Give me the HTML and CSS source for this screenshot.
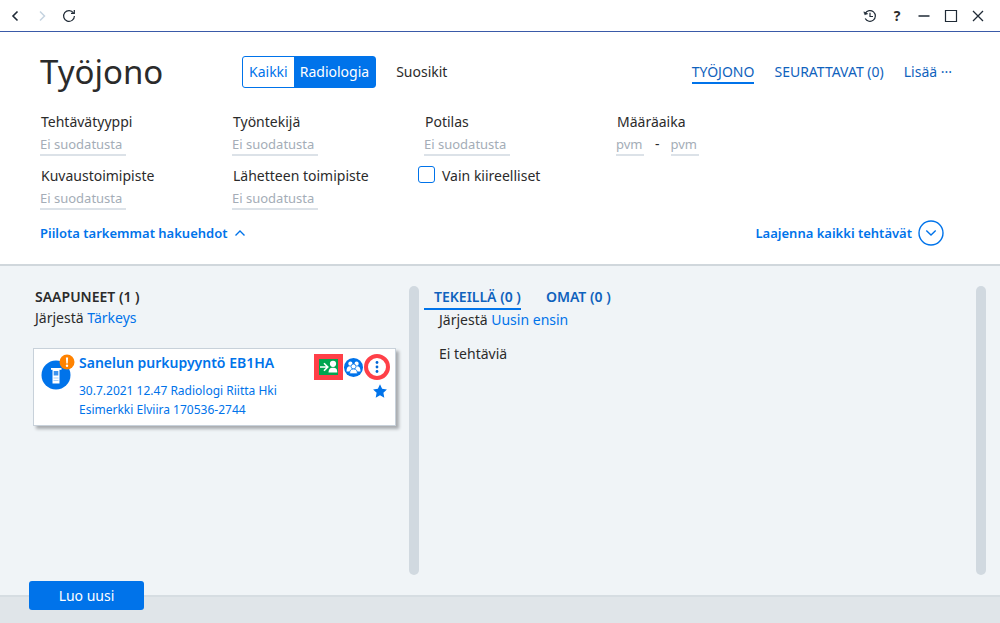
FILE: index.html
```
<!DOCTYPE html>
<html lang="fi">
    <head>
        <title>Työjono</title>
        <meta charset="UTF-8">
        <meta name="viewport" content="width=device-width, initial-scale=1.0">
        <link rel="stylesheet" href="styles.css">
    </head>
    <body>
        <div class="titlebar">
            <button class="tool" aria-label="Takaisin"><svg width="14" height="14" viewBox="0 0 14 14"><path d="M9.5 2.5L5 7l4.5 4.5" stroke-width="1.6"/></svg></button>
            <button class="tool off" aria-label="Eteenpäin" disabled><svg width="14" height="14" viewBox="0 0 14 14"><path d="M5 2.500l4.500 4.500L5 11.500" stroke-width="1.500"/></svg></button>
            <button class="tool" aria-label="Päivitä"><svg width="14" height="14" viewBox="0 0 14 14"><path d="M11.500 4A5.400 5.400 0 1 0 12.400 7" /><path d="M9 4.300h3.300V1"/></svg></button>
            <span class="space"></span>
            <button class="tool" aria-label="Historia"><svg width="14" height="14" viewBox="0 0 14 14"><path d="M2.300 4.200A5.400 5.400 0 1 1 2.200 9.500"/><path d="M7 3.800V7.500h3"/><path d="M.8 2.800l1 3 3-1z" fill="#1f2a36" stroke-width=".5"/></svg></button>
            <button class="tool help" aria-label="Ohje">?</button>
            <button class="tool" aria-label="Pienennä"><svg width="14" height="14" viewBox="0 0 14 14"><path d="M1.500 7h11" stroke-width="1.500"/></svg></button>
            <button class="tool" aria-label="Suurenna"><svg width="14" height="14" viewBox="0 0 14 14"><path d="M1.500 1.500h11v11h-11z"/></svg></button>
            <button class="tool" aria-label="Sulje"><svg width="14" height="14" viewBox="0 0 14 14"><path d="M2 2l10 10M12 2L2 12" stroke-width="1.300"/></svg></button>
        </div>
        <header class="top">
            <div class="head">
                <h1>Työjono</h1>
                <div class="switch">
                    <button>Kaikki</button><button class="on">Radiologia</button>
                </div>
                <button class="plain">Suosikit</button>
                <nav class="views">
                    <a class="current" href="#">TYÖJONO</a>
                    <a href="#">SEURATTAVAT (0)</a>
                    <a class="more" href="#">Lisää ···</a>
                </nav>
            </div>
            <form class="filters">
                <div class="field">
                    <label for="tyyppi">Tehtävätyyppi</label>
                    <input id="tyyppi" type="text" placeholder="Ei suodatusta">
                </div>
                <div class="field">
                    <label for="tekija">Työntekijä</label>
                    <input id="tekija" type="text" placeholder="Ei suodatusta">
                </div>
                <div class="field">
                    <label for="potilas">Potilas</label>
                    <input id="potilas" type="text" placeholder="Ei suodatusta">
                </div>
                <div class="field">
                    <label for="alku">Määräaika</label>
                    <div class="dates">
                        <input id="alku" class="pvm" type="text" placeholder="pvm">
                        <span>-</span>
                        <input class="pvm" type="text" placeholder="pvm" aria-label="Määräaika loppu">
                    </div>
                </div>
                <div class="field">
                    <label for="kuvaus">Kuvaustoimipiste</label>
                    <input id="kuvaus" type="text" placeholder="Ei suodatusta">
                </div>
                <div class="field">
                    <label for="lahete">Lähetteen toimipiste</label>
                    <input id="lahete" type="text" placeholder="Ei suodatusta">
                </div>
                <div class="check">
                    <input id="kiire" type="checkbox">
                    <label for="kiire">Vain kiireelliset</label>
                </div>
            </form>
            <div class="toggles">
                <button class="link">Piilota tarkemmat hakuehdot
                    <svg width="12" height="12" viewBox="0 0 12 12"><path d="M1.500 8.500L6 4l4.500 4.500" stroke-width="1.400"/></svg>
                </button>
                <button class="link">Laajenna kaikki tehtävät
                    <svg class="round" width="26" height="26" viewBox="0 0 26 26"><circle cx="13" cy="13" r="12" stroke-width="1.400"/><path d="M8.300 10.500L13 15l4.700-4.500" stroke-width="1.400"/></svg>
                </button>
            </div>
        </header>
        <main>
            <section class="incoming">
                <h2>SAAPUNEET (1 )</h2>
                <p class="sort">Järjestä <a href="#">Tärkeys</a></p>
                <article class="card">
                    <svg class="type" width="34" height="36" viewBox="0 0 34 36">
                        <circle cx="15" cy="21" r="14.500" fill="#0073ea"/>
                        <path d="M11.500 14h7v15.500h-7z" fill="#fff"/>
                        <path d="M10 14h10.500v1.800H10z" fill="#fff"/>
                        <path d="M12.700 17h4.600v4.500h-4.600z" fill="#3b93ef"/>
                        <path d="M12.500 23.500h5v1h-5zM12.500 26h5v1h-5z" fill="#a8cff8"/>
                        <circle cx="26" cy="8" r="7.500" fill="#ff8200"/>
                        <path d="M24.900 3.500h2.200l-.4 6h-1.400z" fill="#fff"/>
                        <circle cx="26" cy="11.700" r="1.200" fill="#fff"/>
                    </svg>
                    <div class="info">
                        <h3><a href="#">Sanelun purkupyyntö EB1HA</a></h3>
                        <p>30.7.2021 12.47 Radiologi Riitta Hki</p>
                        <p>Esimerkki Elviira 170536-2744</p>
                    </div>
                    <div class="actions">
                        <button class="take" aria-label="Ota tehtävä"><svg width="19" height="16" viewBox="0 0 19 16"><path d="M1 8h7.500M5 4.200L8.800 8 5 11.800" fill="none" stroke="#fff" stroke-width="1.600"/><circle cx="14" cy="4.800" r="3.100" fill="#fff"/><path d="M9.500 13.500c.3-3.500 1.500-4.700 4.500-4.700s4.200 1 4.300 4.700z" fill="#fff"/></svg></button>
                        <button aria-label="Ryhmä"><svg width="19" height="19" viewBox="0 0 19 19"><circle cx="9.500" cy="9.500" r="9.500" fill="#0073ea"/><g fill="#fff"><circle cx="6.400" cy="5.700" r="2.100"/><circle cx="12.600" cy="5.700" r="2.100"/><path d="M2.500 13.500c0-3.500.9-5.300 3.700-5.300S9.500 10 9.500 13.500zM9.500 13.500c0-3.500.5-5.300 3.300-5.300s3.700 1.800 3.700 5.300z"/><g stroke="#0073ea" stroke-width=".8"><circle cx="9.500" cy="8.500" r="2.500"/><path d="M5.600 15.800c0-3.200 1.100-4.800 3.900-4.800s3.900 1.600 3.900 4.800z"/></g></g></svg></button>
                        <button class="menu" aria-label="Lisää toimintoja"><svg width="18" height="18" viewBox="0 0 18 18"><g fill="#0066d6"><circle cx="9" cy="4.500" r="1.400"/><circle cx="9" cy="9" r="1.400"/><circle cx="9" cy="13.500" r="1.400"/></g></svg></button>
                        <button class="star" aria-label="Suosikki"><svg width="14" height="14" viewBox="0 0 14 14"><path d="M7 .3l2.100 4.500 4.800.6-3.500 3.400.9 4.900L7 11.300l-4.300 2.400.9-4.900L.1 5.400l4.800-.6z" fill="#0073ea"/></svg></button>
                    </div>
                </article>
            </section>
            <div class="bar"></div>
            <section class="ongoing">
                <nav class="tabs">
                    <a class="current" href="#">TEKEILLÄ (0 )</a>
                    <a href="#">OMAT (0 )</a>
                </nav>
                <p class="sort">Järjestä <a href="#">Uusin ensin</a></p>
                <p class="empty">Ei tehtäviä</p>
            </section>
            <div class="bar"></div>
        </main>
        <footer>
            <button class="new">Luo uusi</button>
        </footer>
    </body>
</html>
```
FILE: styles.css
```
*{
    box-sizing: border-box;
}
body{
    margin: 0;
    min-height: 100vh;
    display: flex;
    flex-direction: column;
    background-color: #f0f4f7;
    color: #2b2b2b;
    font-family: "Noto Sans", sans-serif;
    font-size: 14px;
    line-height: 20px;
}
h1,h2,h3,p{
    margin: 0;
}
a{
    color: #0073ea;
    text-decoration: none;
}
button{
    font: inherit;
    color: inherit;
    background: none;
    border: 0;
    padding: 0;
    cursor: pointer;
}
svg{
    display: block;
}
.titlebar{
    display: flex;
    align-items: center;
    gap: 13px;
    height: 32px;
    padding: 0 15px 0 8px;
    background-color: #fff;
    border-bottom: 1px solid #3a5aa8;
}
.tool{
    width: 14px;
    height: 20px;
    font-weight: 700;
}
.tool svg{
    fill: none;
    stroke: #1f2a36;
    stroke-width: 1.2;
}
.off svg{
    stroke: #c5d3e0;
}
.space{
    flex: 1;
}
.top{
    background-color: #fff;
    border-bottom: 2px solid #d0d7dc;
    padding: 16px 48px 18px 40px;
}
.head{
    display: flex;
    align-items: center;
    height: 48px;
}
h1{
    width: 202px;
    font-size: 33px;
    font-weight: 400;
    line-height: 48px;
}
.switch{
    display: flex;
    border: 1px solid #0073ea;
    border-radius: 3px;
    height: 32px;
    margin-right: 20px;
    color: #0073ea;
}
.switch button{
    padding: 0 6px;
}
.switch .on{
    background-color: #0073ea;
    color: #fff;
}
.views{
    display: flex;
    gap: 20px;
    margin-left: auto;
}
.views a{
    padding-top: 2px;
    color: #0f62bd;
    border-bottom: 2px solid transparent;
}
.views .current{
    border-color: #0073ea;
}
.filters{
    display: grid;
    grid-template-columns: repeat(4, 192px);
    row-gap: 10px;
    margin-top: 16px;
}
.field label{
    display: block;
    height: 22px;
    padding-left: 1px;
}
.field input{
    display: block;
    width: 86px;
    height: 22px;
    border: 0;
    border-bottom: 2px solid #dce2e8;
    padding: 0;
    background: none;
    font: inherit;
    font-size: 13px;
    color: inherit;
}
.field input::placeholder{
    color: #a4adb7;
    opacity: 1;
}
.field .pvm{
    width: 28px;
}
.dates{
    display: flex;
    gap: 11px;
}
.check{
    display: flex;
    align-items: flex-start;
    gap: 7px;
    margin-left: -6px;
}
.check input{
    appearance: none;
    width: 17px;
    height: 17px;
    margin: 0;
    border: 1px solid #0073ea;
    border-radius: 3px;
}
.toggles{
    display: flex;
    justify-content: space-between;
    align-items: center;
    margin-top: 10px;
    padding-right: 8px;
}
.link{
    display: flex;
    align-items: center;
    gap: 6px;
    color: #0073ea;
    font-size: 13px;
    font-weight: 600;
}
.link svg{
    fill: none;
    stroke: #0073ea;
}
main{
    flex: 1;
    display: flex;
    padding: 20px 14px 20px 0;
}
.incoming{
    flex: 409 1 409px;
    padding: 0 13px 0 33px;
}
.ongoing{
    flex: 557 1 557px;
    padding: 0 20px;
}
.bar{
    flex: none;
    width: 10px;
    border-radius: 5px;
    background-color: #d1d9e0;
}
h2{
    font-size: 14px;
    font-weight: 600;
    line-height: 22px;
}
.incoming h2,.incoming .sort{
    padding-left: 2px;
}
.card{
    display: flex;
    gap: 4px;
    margin-top: 20px;
    padding: 5px 5px 6px 7px;
    background-color: #fff;
    border: 1px solid #c8d1da;
    box-shadow: 3px 3px 3px #a9adb0;
}
.info{
    flex: 1;
    font-size: 12px;
    line-height: 19px;
    color: #0073ea;
}
h3{
    font-size: 14px;
    font-weight: 600;
    line-height: 18px;
    margin-bottom: 9px;
}
.actions{
    display: grid;
    grid-template-columns: 29px 19px 26px;
    column-gap: 1px;
    align-content: start;
    align-items: center;
    justify-items: center;
}
.take{
    width: 29px;
    height: 26px;
    border: 5px solid #ff4048;
    background-color: #00a650;
}
.menu{
    width: 26px;
    height: 26px;
    border: 4px solid #ff4048;
    border-radius: 50%;
}
.star{
    grid-column: 3;
    margin: 4px 0 0 6px;
}
.tabs{
    display: flex;
    gap: 15px;
    margin-left: -15px;
}
.tabs a{
    padding-left: 10px;
    color: #0f62bd;
    font-weight: 600;
    line-height: 22px;
    border-bottom: 2px solid transparent;
}
.tabs .current{
    border-color: #0073ea;
}
.empty{
    margin-top: 14px;
}
footer{
    height: 28px;
    padding-left: 29px;
    background-color: #e0e5e9;
    border-top: 2px solid #d6dde2;
}
.new{
    display: block;
    width: 115px;
    height: 29px;
    margin-top: -16px;
    border-radius: 3px;
    background-color: #0073ea;
    color: #fff;
}
```
